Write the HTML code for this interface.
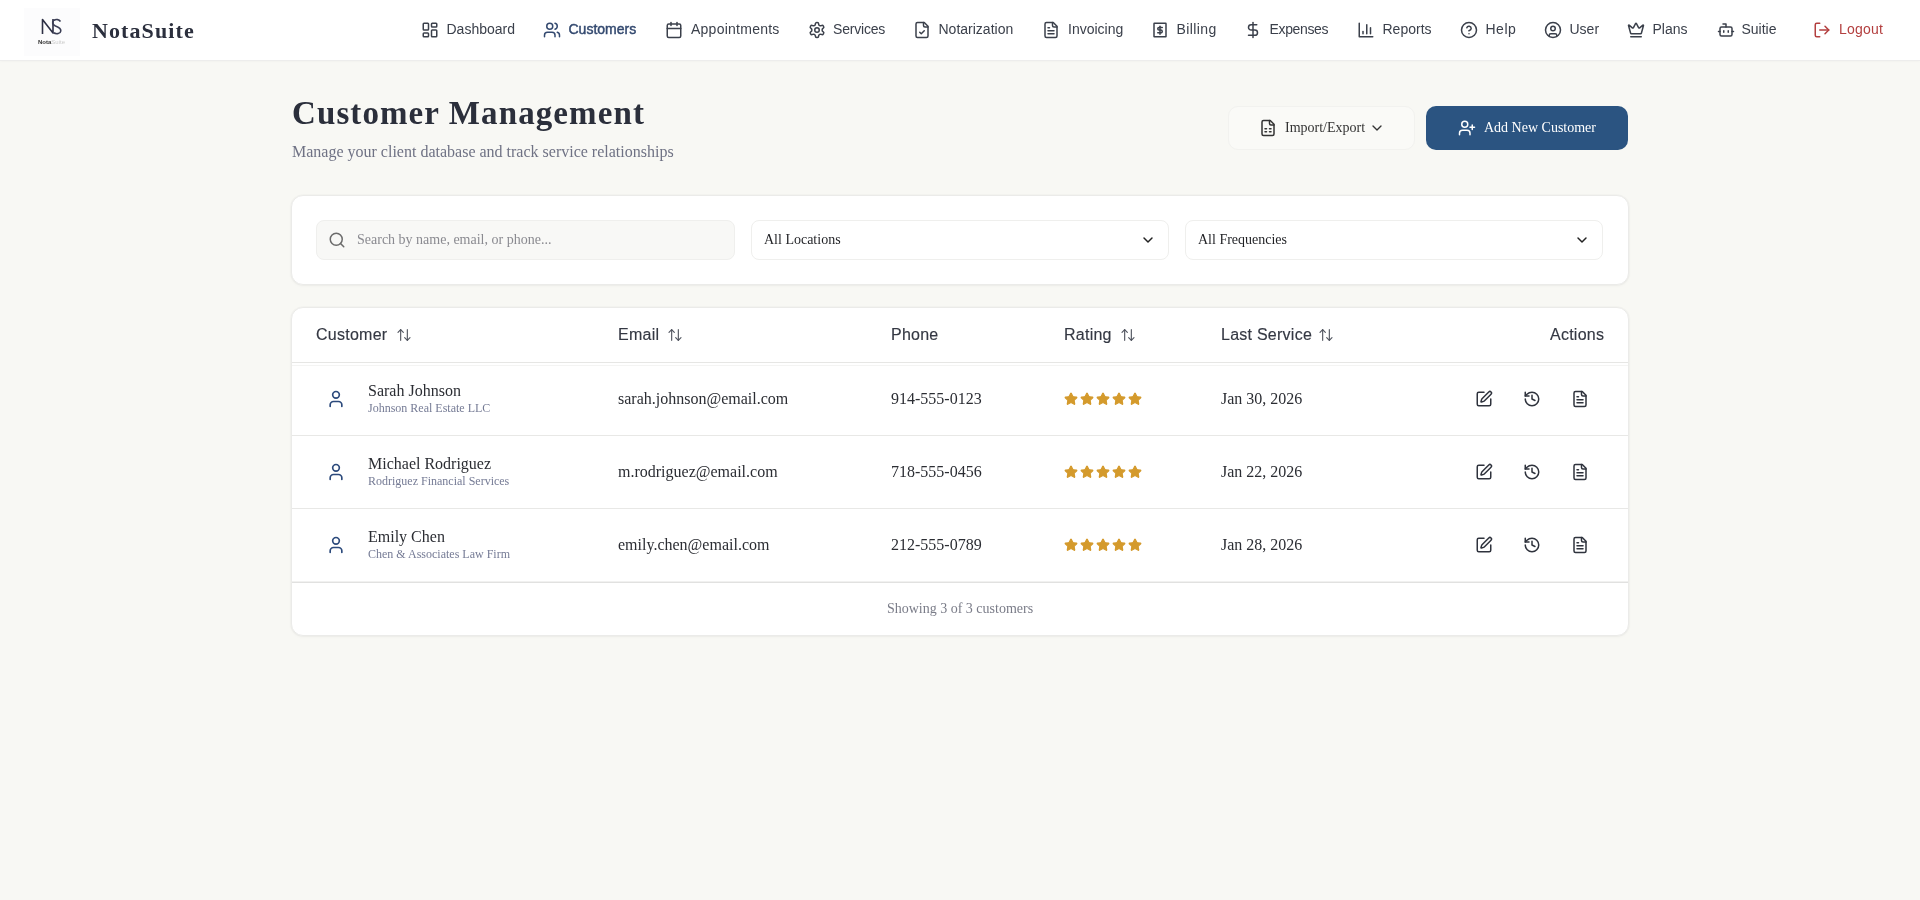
<!DOCTYPE html>
<html><head><meta charset="utf-8">
<style>
*{box-sizing:border-box;margin:0;padding:0}
html,body{will-change:transform;width:1920px;height:900px;overflow:hidden;background:#f8f8f4;font-family:"Liberation Serif",serif;color:#2d2f36}
.abs{position:absolute}
svg{display:block;fill:none;stroke:currentColor;stroke-width:2;stroke-linecap:round;stroke-linejoin:round}
#hdr{position:absolute;left:0;top:0;width:1920px;height:61px;background:#fff;border-bottom:1px solid #ededec;box-shadow:0 1px 2px rgba(0,0,0,0.025)}
.logo{position:absolute;left:24px;top:8px;width:56px;height:48px;background:#fcfcfd}
.brand{position:absolute;left:92px;top:16px;font-family:"Liberation Serif",serif;font-weight:700;font-size:22px;line-height:30px;color:#2b2f3d;letter-spacing:1.1px}
.nav{position:absolute;top:0;height:60px;color:#3b404b}
.nav svg{position:absolute;top:21px;width:18px;height:18px}
.nav span{position:absolute;top:19px;font-family:"Liberation Sans",sans-serif;font-size:14px;line-height:20px;white-space:nowrap}
.nav.act{color:#33496f}
.nav.act span{font-weight:400;-webkit-text-stroke:0.45px currentColor}
.nav.out{color:#b33f3f}
h1{position:absolute;left:292px;top:91px;font-family:"Liberation Serif",serif;font-weight:700;font-size:33px;line-height:44px;letter-spacing:1.1px;color:#2b2f3b;white-space:nowrap}
.sub{position:absolute;left:292px;top:141px;font-size:16px;line-height:22px;color:#6f7284;white-space:nowrap}
.btn1{position:absolute;left:1228px;top:106px;width:187px;height:44px;border-radius:10px;background:#fafaf7;border:1px solid #f2f2ef;color:#333}
.btn2{position:absolute;left:1426px;top:106px;width:202px;height:44px;border-radius:10px;background:#2b5481;color:#fff}
.card{position:absolute;left:291px;width:1338px;background:#fff;border:1px solid #ebebe9;border-radius:12px;box-shadow:0 0 0 1px rgba(0,0,0,0.015),0 1px 3px rgba(0,0,0,0.04)}
.inp{position:absolute;top:220px;height:40px;border-radius:8px;font-size:14px;line-height:38px;white-space:nowrap}
.th{position:absolute;top:324px;font-family:"Liberation Sans",sans-serif;font-size:16px;line-height:22px;color:#343843;white-space:nowrap;-webkit-text-stroke:0.15px currentColor;letter-spacing:0.25px}
.th svg{position:absolute;top:3px;width:16px;height:16px;color:#50545e;stroke-width:1.7;-webkit-text-stroke:0}
.line{position:absolute;left:292px;width:1336px;height:1px;background:#e8e8e6}
.cell{position:absolute;font-size:16px;line-height:20px;color:#2b2d33;white-space:nowrap}
.comp{position:absolute;font-size:12px;line-height:14px;color:#757b95;white-space:nowrap}
.av{position:absolute;width:20px;height:20px;color:#2c4a7c}
.avbg{position:absolute;width:34px;height:34px;border-radius:50%;background:#fdfdfe}
.stars{position:absolute;color:#d49a2c}
.stars svg{float:left;width:14px;height:14px;margin-right:2px;fill:#d49a2c}
.aic{position:absolute;width:18px;height:18px;color:#2f333d}
</style></head><body>
<div id="hdr"></div>
<div class="logo">
  <svg class="abs" style="left:17px;top:10px;width:22px;height:17px;stroke-width:1.6;stroke-linecap:butt" viewBox="0 0 22 17">
    <path d="M1.5 16V1.5L12 15V1" stroke="#2d2f45"/>
    <path d="M19.5 3.5C18 1.5 15 1 13 2.2C10.5 3.8 11.5 6.8 14.5 8C18 9.3 20 10.5 19.8 13C19.5 15.8 15.5 16.5 12.5 14.8" stroke="#3b3e55"/>
  </svg>
  <div class="abs" style="left:14px;top:30px;font-family:'Liberation Sans',sans-serif;font-weight:700;font-size:6px;line-height:8px;color:#333;white-space:nowrap">Nota<span style="color:#ccc;font-weight:400">Suite</span></div>
</div>
<div class="brand">NotaSuite</div>

<!-- NAV -->
<div class="nav"><svg style="left:421px" viewBox="0 0 24 24"><rect width="7" height="9" x="3" y="3" rx="1"/><rect width="7" height="5" x="14" y="3" rx="1"/><rect width="7" height="9" x="14" y="12" rx="1"/><rect width="7" height="5" x="3" y="16" rx="1"/></svg><span style="left:446.5px">Dashboard</span></div>
<div class="nav act"><svg style="left:543px" viewBox="0 0 24 24"><path d="M16 21v-2a4 4 0 0 0-4-4H6a4 4 0 0 0-4 4v2"/><circle cx="9" cy="7" r="4"/><path d="M22 21v-2a4 4 0 0 0-3-3.87"/><path d="M16 3.13a4 4 0 0 1 0 7.75"/></svg><span style="left:568.5px">Customers</span></div>
<div class="nav"><svg style="left:665px" viewBox="0 0 24 24"><rect width="18" height="18" x="3" y="4" rx="2" ry="2"/><line x1="16" x2="16" y1="2" y2="6"/><line x1="8" x2="8" y1="2" y2="6"/><line x1="3" x2="21" y1="10" y2="10"/></svg><span style="left:691px;letter-spacing:0.25px">Appointments</span></div>
<div class="nav"><svg style="left:808px" viewBox="0 0 24 24"><path d="M12.22 2h-.44a2 2 0 0 0-2 2v.18a2 2 0 0 1-1 1.73l-.43.25a2 2 0 0 1-2 0l-.15-.08a2 2 0 0 0-2.73.73l-.22.38a2 2 0 0 0 .73 2.730l.15.1a2 2 0 0 1 1 1.72v.51a2 2 0 0 1-1 1.74l-.15.09a2 2 0 0 0-.73 2.73l.22.38a2 2 0 0 0 2.73.73l.15-.08a2 2 0 0 1 2 0l.43.25a2 2 0 0 1 1 1.73V20a2 2 0 0 0 2 2h.44a2 2 0 0 0 2-2v-.18a2 2 0 0 1 1-1.73l.43-.25a2 2 0 0 1 2 0l.15.08a2 2 0 0 0 2.73-.73l.22-.39a2 2 0 0 0-.73-2.73l-.15-.08a2 2 0 0 1-1-1.74v-.5a2 2 0 0 1 1-1.74l.15-.09a2 2 0 0 0 .73-2.73l-.22-.38a2 2 0 0 0-2.73-.73l-.15.08a2 2 0 0 1-2 0l-.43-.25a2 2 0 0 1-1-1.73V4a2 2 0 0 0-2-2z"/><circle cx="12" cy="12" r="3"/></svg><span style="left:833px;letter-spacing:-0.2px">Services</span></div>
<div class="nav"><svg style="left:913px" viewBox="0 0 24 24"><path d="M15 2H6a2 2 0 0 0-2 2v16a2 2 0 0 0 2 2h12a2 2 0 0 0 2-2V7Z"/><path d="M14 2v4a2 2 0 0 0 2 2h4"/><path d="m9 15 2 2 4-4"/></svg><span style="left:938.5px">Notarization</span></div>
<div class="nav"><svg style="left:1041.5px" viewBox="0 0 24 24"><path d="M15 2H6a2 2 0 0 0-2 2v16a2 2 0 0 0 2 2h12a2 2 0 0 0 2-2V7Z"/><path d="M14 2v4a2 2 0 0 0 2 2h4"/><path d="M10 9H8"/><path d="M16 13H8"/><path d="M16 17H8"/></svg><span style="left:1068px">Invoicing</span></div>
<div class="nav"><svg style="left:1151px" viewBox="0 0 24 24"><rect x="4" y="3" width="16" height="18" rx="0.5"/><path d="M15 8.5h-4.2a1.8 1.8 0 0 0 0 3.6h2.4a1.8 1.8 0 0 1 0 3.6H9"/><path d="M12 7v10.5"/></svg><span style="left:1176.5px;letter-spacing:0.4px">Billing</span></div>
<div class="nav"><svg style="left:1244px" viewBox="0 0 24 24"><line x1="12" x2="12" y1="2" y2="22"/><path d="M17 5H9.5a3.5 3.5 0 0 0 0 7h5a3.5 3.5 0 0 1 0 7H6"/></svg><span style="left:1269.5px;letter-spacing:-0.35px">Expenses</span></div>
<div class="nav"><svg style="left:1357px" viewBox="0 0 24 24"><path d="M3 3v18h18"/><path d="M18 17V9"/><path d="M13 17V5"/><path d="M8 17v-3"/></svg><span style="left:1382.5px">Reports</span></div>
<div class="nav"><svg style="left:1460px" viewBox="0 0 24 24"><circle cx="12" cy="12" r="10"/><path d="M9.09 9a3 3 0 0 1 5.83 1c0 2-3 3-3 3"/><path d="M12 17h.01"/></svg><span style="left:1485.5px;letter-spacing:0.5px">Help</span></div>
<div class="nav"><svg style="left:1544px" viewBox="0 0 24 24"><circle cx="12" cy="12" r="10"/><circle cx="12" cy="10" r="3"/><path d="M7 20.662V19a2 2 0 0 1 2-2h6a2 2 0 0 1 2 2v1.662"/></svg><span style="left:1569.5px">User</span></div>
<div class="nav"><svg style="left:1627px" viewBox="0 0 24 24"><path d="M11.562 3.266a.5.5 0 0 1 .876 0L15.39 8.87a1 1 0 0 0 1.516.294L21.183 5.5a.5.5 0 0 1 .798.519l-2.834 10.246a1 1 0 0 1-.956.734H5.81a1 1 0 0 1-.957-.734L2.02 6.02a.5.5 0 0 1 .798-.519l4.276 3.664a1 1 0 0 0 1.516-.294z"/><path d="M5 21h14"/></svg><span style="left:1652.5px">Plans</span></div>
<div class="nav"><svg style="left:1716.5px" viewBox="0 0 24 24"><path d="M12 8V4H8"/><rect width="16" height="12" x="4" y="8" rx="2"/><path d="M2 14h2"/><path d="M20 14h2"/><path d="M15 13v2"/><path d="M9 13v2"/></svg><span style="left:1741.5px">Suitie</span></div>
<div class="nav out"><svg style="left:1813px" viewBox="0 0 24 24"><path d="M9 21H5a2 2 0 0 1-2-2V5a2 2 0 0 1 2-2h4"/><polyline points="16 17 21 12 16 7"/><line x1="21" x2="9" y1="12" y2="12"/></svg><span style="left:1839px;letter-spacing:0.2px">Logout</span></div>

<!-- TITLE -->
<h1>Customer Management</h1>
<div class="sub">Manage your client database and track service relationships</div>

<div class="btn1">
  <svg class="abs" style="left:30px;top:12px;width:18px;height:18px" viewBox="0 0 24 24"><path d="M15 2H6a2 2 0 0 0-2 2v16a2 2 0 0 0 2 2h12a2 2 0 0 0 2-2V7Z"/><path d="M14 2v4a2 2 0 0 0 2 2h4"/><path d="M8 13h2"/><path d="M14 13h2"/><path d="M8 17h2"/><path d="M14 17h2"/></svg>
  <div class="abs" style="left:56px;top:11px;font-size:14px;line-height:20px;white-space:nowrap">Import/Export</div>
  <svg class="abs" style="left:140px;top:13px;width:16px;height:16px" viewBox="0 0 24 24"><path d="m6 9 6 6 6-6"/></svg>
</div>
<div class="btn2">
  <svg class="abs" style="left:31.5px;top:13px;width:18px;height:18px" viewBox="0 0 24 24"><path d="M16 21v-2a4 4 0 0 0-4-4H6a4 4 0 0 0-4 4v2"/><circle cx="9" cy="7" r="4"/><line x1="19" x2="19" y1="8" y2="14"/><line x1="22" x2="16" y1="11" y2="11"/></svg>
  <div class="abs" style="left:58px;top:12px;font-size:14px;line-height:20px;white-space:nowrap">Add New Customer</div>
</div>

<!-- FILTER CARD -->
<div class="card" style="top:195px;height:90px"></div>
<div class="inp" style="left:316px;width:419px;background:#f8f8f6;border:1px solid #efefed">
  <svg class="abs" style="left:11px;top:10px;width:18px;height:18px;color:#6b6b6b" viewBox="0 0 24 24"><circle cx="11" cy="11" r="8"/><path d="m21 21-4.3-4.3"/></svg>
  <div class="abs" style="left:40px;top:0;color:#8a8a90">Search by name, email, or phone...</div>
</div>
<div class="inp" style="left:751px;width:418px;background:#fff;border:1px solid #efefed">
  <div class="abs" style="left:12px;top:0;color:#1f2024">All Locations</div>
  <svg class="abs" style="left:388px;top:11px;width:16px;height:16px;color:#222;stroke-width:2.2" viewBox="0 0 24 24"><path d="m6 9 6 6 6-6"/></svg>
</div>
<div class="inp" style="left:1185px;width:418px;background:#fff;border:1px solid #efefed">
  <div class="abs" style="left:12px;top:0;color:#1f2024">All Frequencies</div>
  <svg class="abs" style="left:388px;top:11px;width:16px;height:16px;color:#222;stroke-width:2.2" viewBox="0 0 24 24"><path d="m6 9 6 6 6-6"/></svg>
</div>

<!-- TABLE CARD -->
<div class="card" style="top:307px;height:329px"></div>
<div class="th" style="left:316px">Customer<svg style="left:80px" viewBox="0 0 24 24"><path d="m21 16-4 4-4-4"/><path d="M17 20V4"/><path d="m3 8 4-4 4 4"/><path d="M7 4v16"/></svg></div>
<div class="th" style="left:618px">Email<svg style="left:49px" viewBox="0 0 24 24"><path d="m21 16-4 4-4-4"/><path d="M17 20V4"/><path d="m3 8 4-4 4 4"/><path d="M7 4v16"/></svg></div>
<div class="th" style="left:891px">Phone</div>
<div class="th" style="left:1064px">Rating<svg style="left:56px" viewBox="0 0 24 24"><path d="m21 16-4 4-4-4"/><path d="M17 20V4"/><path d="m3 8 4-4 4 4"/><path d="M7 4v16"/></svg></div>
<div class="th" style="left:1221px">Last Service<svg style="left:97px" viewBox="0 0 24 24"><path d="m21 16-4 4-4-4"/><path d="M17 20V4"/><path d="m3 8 4-4 4 4"/><path d="M7 4v16"/></svg></div>
<div class="th" style="left:1550px">Actions</div>
<div class="line" style="top:362px;background:#e6e6e4"></div>
<div class="line" style="top:365px;background:#f4f4f3"></div>

<!--rows-->

<svg class="av" style="left:326px;top:389px" viewBox="0 0 24 24"><path d="M19 21v-2a4 4 0 0 0-4-4H9a4 4 0 0 0-4 4v2"/><circle cx="12" cy="7" r="4"/></svg>
<div class="cell" style="left:368px;top:381px">Sarah Johnson</div>
<div class="comp" style="left:368px;top:401px">Johnson Real Estate LLC</div>
<div class="cell" style="left:618px;top:389px">sarah.johnson@email.com</div>
<div class="cell" style="left:891px;top:389px">914-555-0123</div>
<div class="stars" style="left:1064px;top:392px"><svg viewBox="0 0 24 24"><path d="M11.525 2.295a.53.53 0 0 1 .95 0l2.31 4.679a2.123 2.123 0 0 0 1.595 1.16l5.166.756a.53.53 0 0 1 .294.904l-3.736 3.638a2.123 2.123 0 0 0-.611 1.878l.882 5.14a.53.53 0 0 1-.771.56l-4.618-2.428a2.122 2.122 0 0 0-1.973 0L6.396 21.01a.53.53 0 0 1-.77-.56l.881-5.139a2.122 2.122 0 0 0-.611-1.879L2.16 9.795a.53.53 0 0 1 .294-.906l5.165-.755a2.122 2.122 0 0 0 1.597-1.16z"/></svg><svg viewBox="0 0 24 24"><path d="M11.525 2.295a.53.53 0 0 1 .95 0l2.31 4.679a2.123 2.123 0 0 0 1.595 1.16l5.166.756a.53.53 0 0 1 .294.904l-3.736 3.638a2.123 2.123 0 0 0-.611 1.878l.882 5.14a.53.53 0 0 1-.771.56l-4.618-2.428a2.122 2.122 0 0 0-1.973 0L6.396 21.01a.53.53 0 0 1-.77-.56l.881-5.139a2.122 2.122 0 0 0-.611-1.879L2.16 9.795a.53.53 0 0 1 .294-.906l5.165-.755a2.122 2.122 0 0 0 1.597-1.16z"/></svg><svg viewBox="0 0 24 24"><path d="M11.525 2.295a.53.53 0 0 1 .95 0l2.31 4.679a2.123 2.123 0 0 0 1.595 1.16l5.166.756a.53.53 0 0 1 .294.904l-3.736 3.638a2.123 2.123 0 0 0-.611 1.878l.882 5.14a.53.53 0 0 1-.771.56l-4.618-2.428a2.122 2.122 0 0 0-1.973 0L6.396 21.01a.53.53 0 0 1-.77-.56l.881-5.139a2.122 2.122 0 0 0-.611-1.879L2.16 9.795a.53.53 0 0 1 .294-.906l5.165-.755a2.122 2.122 0 0 0 1.597-1.16z"/></svg><svg viewBox="0 0 24 24"><path d="M11.525 2.295a.53.53 0 0 1 .95 0l2.31 4.679a2.123 2.123 0 0 0 1.595 1.16l5.166.756a.53.53 0 0 1 .294.904l-3.736 3.638a2.123 2.123 0 0 0-.611 1.878l.882 5.14a.53.53 0 0 1-.771.56l-4.618-2.428a2.122 2.122 0 0 0-1.973 0L6.396 21.01a.53.53 0 0 1-.77-.56l.881-5.139a2.122 2.122 0 0 0-.611-1.879L2.16 9.795a.53.53 0 0 1 .294-.906l5.165-.755a2.122 2.122 0 0 0 1.597-1.16z"/></svg><svg viewBox="0 0 24 24"><path d="M11.525 2.295a.53.53 0 0 1 .95 0l2.31 4.679a2.123 2.123 0 0 0 1.595 1.16l5.166.756a.53.53 0 0 1 .294.904l-3.736 3.638a2.123 2.123 0 0 0-.611 1.878l.882 5.14a.53.53 0 0 1-.771.56l-4.618-2.428a2.122 2.122 0 0 0-1.973 0L6.396 21.01a.53.53 0 0 1-.77-.56l.881-5.139a2.122 2.122 0 0 0-.611-1.879L2.16 9.795a.53.53 0 0 1 .294-.906l5.165-.755a2.122 2.122 0 0 0 1.597-1.16z"/></svg></div>
<div class="cell" style="left:1221px;top:389px">Jan 30, 2026</div>
<svg class="aic" style="left:1475px;top:390px" viewBox="0 0 24 24"><path d="M12 3H5a2 2 0 0 0-2 2v14a2 2 0 0 0 2 2h14a2 2 0 0 0 2-2v-7"/><path d="M18.375 2.625a1 1 0 0 1 3 3l-9.013 9.014a2 2 0 0 1-.853.505l-2.873.84a.5.5 0 0 1-.62-.62l.84-2.873a2 2 0 0 1 .506-.852z"/></svg>
<svg class="aic" style="left:1523px;top:390px" viewBox="0 0 24 24"><path d="M3 12a9 9 0 1 0 9-9 9.75 9.75 0 0 0-6.74 2.740L3 8"/><path d="M3 3v5h5"/><path d="M12 7v5l4 2"/></svg>
<svg class="aic" style="left:1571px;top:390px" viewBox="0 0 24 24"><path d="M15 2H6a2 2 0 0 0-2 2v16a2 2 0 0 0 2 2h12a2 2 0 0 0 2-2V7Z"/><path d="M14 2v4a2 2 0 0 0 2 2h4"/><path d="M10 9H8"/><path d="M16 13H8"/><path d="M16 17H8"/></svg>
<div class="line" style="top:435px"></div>

<svg class="av" style="left:326px;top:462px" viewBox="0 0 24 24"><path d="M19 21v-2a4 4 0 0 0-4-4H9a4 4 0 0 0-4 4v2"/><circle cx="12" cy="7" r="4"/></svg>
<div class="cell" style="left:368px;top:454px">Michael Rodriguez</div>
<div class="comp" style="left:368px;top:474px">Rodriguez Financial Services</div>
<div class="cell" style="left:618px;top:462px">m.rodriguez@email.com</div>
<div class="cell" style="left:891px;top:462px">718-555-0456</div>
<div class="stars" style="left:1064px;top:465px"><svg viewBox="0 0 24 24"><path d="M11.525 2.295a.53.53 0 0 1 .95 0l2.31 4.679a2.123 2.123 0 0 0 1.595 1.16l5.166.756a.53.53 0 0 1 .294.904l-3.736 3.638a2.123 2.123 0 0 0-.611 1.878l.882 5.14a.53.53 0 0 1-.771.56l-4.618-2.428a2.122 2.122 0 0 0-1.973 0L6.396 21.01a.53.53 0 0 1-.77-.56l.881-5.139a2.122 2.122 0 0 0-.611-1.879L2.16 9.795a.53.53 0 0 1 .294-.906l5.165-.755a2.122 2.122 0 0 0 1.597-1.16z"/></svg><svg viewBox="0 0 24 24"><path d="M11.525 2.295a.53.53 0 0 1 .95 0l2.31 4.679a2.123 2.123 0 0 0 1.595 1.16l5.166.756a.53.53 0 0 1 .294.904l-3.736 3.638a2.123 2.123 0 0 0-.611 1.878l.882 5.14a.53.53 0 0 1-.771.56l-4.618-2.428a2.122 2.122 0 0 0-1.973 0L6.396 21.01a.53.53 0 0 1-.77-.56l.881-5.139a2.122 2.122 0 0 0-.611-1.879L2.16 9.795a.53.53 0 0 1 .294-.906l5.165-.755a2.122 2.122 0 0 0 1.597-1.16z"/></svg><svg viewBox="0 0 24 24"><path d="M11.525 2.295a.53.53 0 0 1 .95 0l2.31 4.679a2.123 2.123 0 0 0 1.595 1.16l5.166.756a.53.53 0 0 1 .294.904l-3.736 3.638a2.123 2.123 0 0 0-.611 1.878l.882 5.14a.53.53 0 0 1-.771.56l-4.618-2.428a2.122 2.122 0 0 0-1.973 0L6.396 21.01a.53.53 0 0 1-.77-.56l.881-5.139a2.122 2.122 0 0 0-.611-1.879L2.16 9.795a.53.53 0 0 1 .294-.906l5.165-.755a2.122 2.122 0 0 0 1.597-1.16z"/></svg><svg viewBox="0 0 24 24"><path d="M11.525 2.295a.53.53 0 0 1 .95 0l2.31 4.679a2.123 2.123 0 0 0 1.595 1.16l5.166.756a.53.53 0 0 1 .294.904l-3.736 3.638a2.123 2.123 0 0 0-.611 1.878l.882 5.14a.53.53 0 0 1-.771.56l-4.618-2.428a2.122 2.122 0 0 0-1.973 0L6.396 21.01a.53.53 0 0 1-.77-.56l.881-5.139a2.122 2.122 0 0 0-.611-1.879L2.16 9.795a.53.53 0 0 1 .294-.906l5.165-.755a2.122 2.122 0 0 0 1.597-1.16z"/></svg><svg viewBox="0 0 24 24"><path d="M11.525 2.295a.53.53 0 0 1 .95 0l2.31 4.679a2.123 2.123 0 0 0 1.595 1.16l5.166.756a.53.53 0 0 1 .294.904l-3.736 3.638a2.123 2.123 0 0 0-.611 1.878l.882 5.14a.53.53 0 0 1-.771.56l-4.618-2.428a2.122 2.122 0 0 0-1.973 0L6.396 21.01a.53.53 0 0 1-.77-.56l.881-5.139a2.122 2.122 0 0 0-.611-1.879L2.16 9.795a.53.53 0 0 1 .294-.906l5.165-.755a2.122 2.122 0 0 0 1.597-1.16z"/></svg></div>
<div class="cell" style="left:1221px;top:462px">Jan 22, 2026</div>
<svg class="aic" style="left:1475px;top:463px" viewBox="0 0 24 24"><path d="M12 3H5a2 2 0 0 0-2 2v14a2 2 0 0 0 2 2h14a2 2 0 0 0 2-2v-7"/><path d="M18.375 2.625a1 1 0 0 1 3 3l-9.013 9.014a2 2 0 0 1-.853.505l-2.873.84a.5.5 0 0 1-.62-.62l.84-2.873a2 2 0 0 1 .506-.852z"/></svg>
<svg class="aic" style="left:1523px;top:463px" viewBox="0 0 24 24"><path d="M3 12a9 9 0 1 0 9-9 9.75 9.75 0 0 0-6.74 2.740L3 8"/><path d="M3 3v5h5"/><path d="M12 7v5l4 2"/></svg>
<svg class="aic" style="left:1571px;top:463px" viewBox="0 0 24 24"><path d="M15 2H6a2 2 0 0 0-2 2v16a2 2 0 0 0 2 2h12a2 2 0 0 0 2-2V7Z"/><path d="M14 2v4a2 2 0 0 0 2 2h4"/><path d="M10 9H8"/><path d="M16 13H8"/><path d="M16 17H8"/></svg>
<div class="line" style="top:508px"></div>

<svg class="av" style="left:326px;top:535px" viewBox="0 0 24 24"><path d="M19 21v-2a4 4 0 0 0-4-4H9a4 4 0 0 0-4 4v2"/><circle cx="12" cy="7" r="4"/></svg>
<div class="cell" style="left:368px;top:527px">Emily Chen</div>
<div class="comp" style="left:368px;top:547px">Chen &amp; Associates Law Firm</div>
<div class="cell" style="left:618px;top:535px">emily.chen@email.com</div>
<div class="cell" style="left:891px;top:535px">212-555-0789</div>
<div class="stars" style="left:1064px;top:538px"><svg viewBox="0 0 24 24"><path d="M11.525 2.295a.53.53 0 0 1 .95 0l2.31 4.679a2.123 2.123 0 0 0 1.595 1.16l5.166.756a.53.53 0 0 1 .294.904l-3.736 3.638a2.123 2.123 0 0 0-.611 1.878l.882 5.14a.53.53 0 0 1-.771.56l-4.618-2.428a2.122 2.122 0 0 0-1.973 0L6.396 21.01a.53.53 0 0 1-.77-.56l.881-5.139a2.122 2.122 0 0 0-.611-1.879L2.16 9.795a.53.53 0 0 1 .294-.906l5.165-.755a2.122 2.122 0 0 0 1.597-1.16z"/></svg><svg viewBox="0 0 24 24"><path d="M11.525 2.295a.53.53 0 0 1 .95 0l2.31 4.679a2.123 2.123 0 0 0 1.595 1.16l5.166.756a.53.53 0 0 1 .294.904l-3.736 3.638a2.123 2.123 0 0 0-.611 1.878l.882 5.14a.53.53 0 0 1-.771.56l-4.618-2.428a2.122 2.122 0 0 0-1.973 0L6.396 21.01a.53.53 0 0 1-.77-.56l.881-5.139a2.122 2.122 0 0 0-.611-1.879L2.16 9.795a.53.53 0 0 1 .294-.906l5.165-.755a2.122 2.122 0 0 0 1.597-1.16z"/></svg><svg viewBox="0 0 24 24"><path d="M11.525 2.295a.53.53 0 0 1 .95 0l2.31 4.679a2.123 2.123 0 0 0 1.595 1.16l5.166.756a.53.53 0 0 1 .294.904l-3.736 3.638a2.123 2.123 0 0 0-.611 1.878l.882 5.14a.53.53 0 0 1-.771.56l-4.618-2.428a2.122 2.122 0 0 0-1.973 0L6.396 21.01a.53.53 0 0 1-.77-.56l.881-5.139a2.122 2.122 0 0 0-.611-1.879L2.16 9.795a.53.53 0 0 1 .294-.906l5.165-.755a2.122 2.122 0 0 0 1.597-1.16z"/></svg><svg viewBox="0 0 24 24"><path d="M11.525 2.295a.53.53 0 0 1 .95 0l2.31 4.679a2.123 2.123 0 0 0 1.595 1.16l5.166.756a.53.53 0 0 1 .294.904l-3.736 3.638a2.123 2.123 0 0 0-.611 1.878l.882 5.14a.53.53 0 0 1-.771.56l-4.618-2.428a2.122 2.122 0 0 0-1.973 0L6.396 21.01a.53.53 0 0 1-.77-.56l.881-5.139a2.122 2.122 0 0 0-.611-1.879L2.16 9.795a.53.53 0 0 1 .294-.906l5.165-.755a2.122 2.122 0 0 0 1.597-1.16z"/></svg><svg viewBox="0 0 24 24"><path d="M11.525 2.295a.53.53 0 0 1 .95 0l2.31 4.679a2.123 2.123 0 0 0 1.595 1.16l5.166.756a.53.53 0 0 1 .294.904l-3.736 3.638a2.123 2.123 0 0 0-.611 1.878l.882 5.14a.53.53 0 0 1-.771.56l-4.618-2.428a2.122 2.122 0 0 0-1.973 0L6.396 21.01a.53.53 0 0 1-.77-.56l.881-5.139a2.122 2.122 0 0 0-.611-1.879L2.16 9.795a.53.53 0 0 1 .294-.906l5.165-.755a2.122 2.122 0 0 0 1.597-1.16z"/></svg></div>
<div class="cell" style="left:1221px;top:535px">Jan 28, 2026</div>
<svg class="aic" style="left:1475px;top:536px" viewBox="0 0 24 24"><path d="M12 3H5a2 2 0 0 0-2 2v14a2 2 0 0 0 2 2h14a2 2 0 0 0 2-2v-7"/><path d="M18.375 2.625a1 1 0 0 1 3 3l-9.013 9.014a2 2 0 0 1-.853.505l-2.873.84a.5.5 0 0 1-.62-.62l.84-2.873a2 2 0 0 1 .506-.852z"/></svg>
<svg class="aic" style="left:1523px;top:536px" viewBox="0 0 24 24"><path d="M3 12a9 9 0 1 0 9-9 9.75 9.75 0 0 0-6.74 2.740L3 8"/><path d="M3 3v5h5"/><path d="M12 7v5l4 2"/></svg>
<svg class="aic" style="left:1571px;top:536px" viewBox="0 0 24 24"><path d="M15 2H6a2 2 0 0 0-2 2v16a2 2 0 0 0 2 2h12a2 2 0 0 0 2-2V7Z"/><path d="M14 2v4a2 2 0 0 0 2 2h4"/><path d="M10 9H8"/><path d="M16 13H8"/><path d="M16 17H8"/></svg>
<div class="line" style="top:581px;background:#f1f1f0"></div><div class="line" style="top:582px;background:#e1e1e0"></div>
<div class="abs" style="left:292px;top:599px;width:1336px;text-align:center;font-size:14px;line-height:20px;color:#7a7c88">Showing 3 of 3 customers</div>
<!--/rows-->
</body></html>
